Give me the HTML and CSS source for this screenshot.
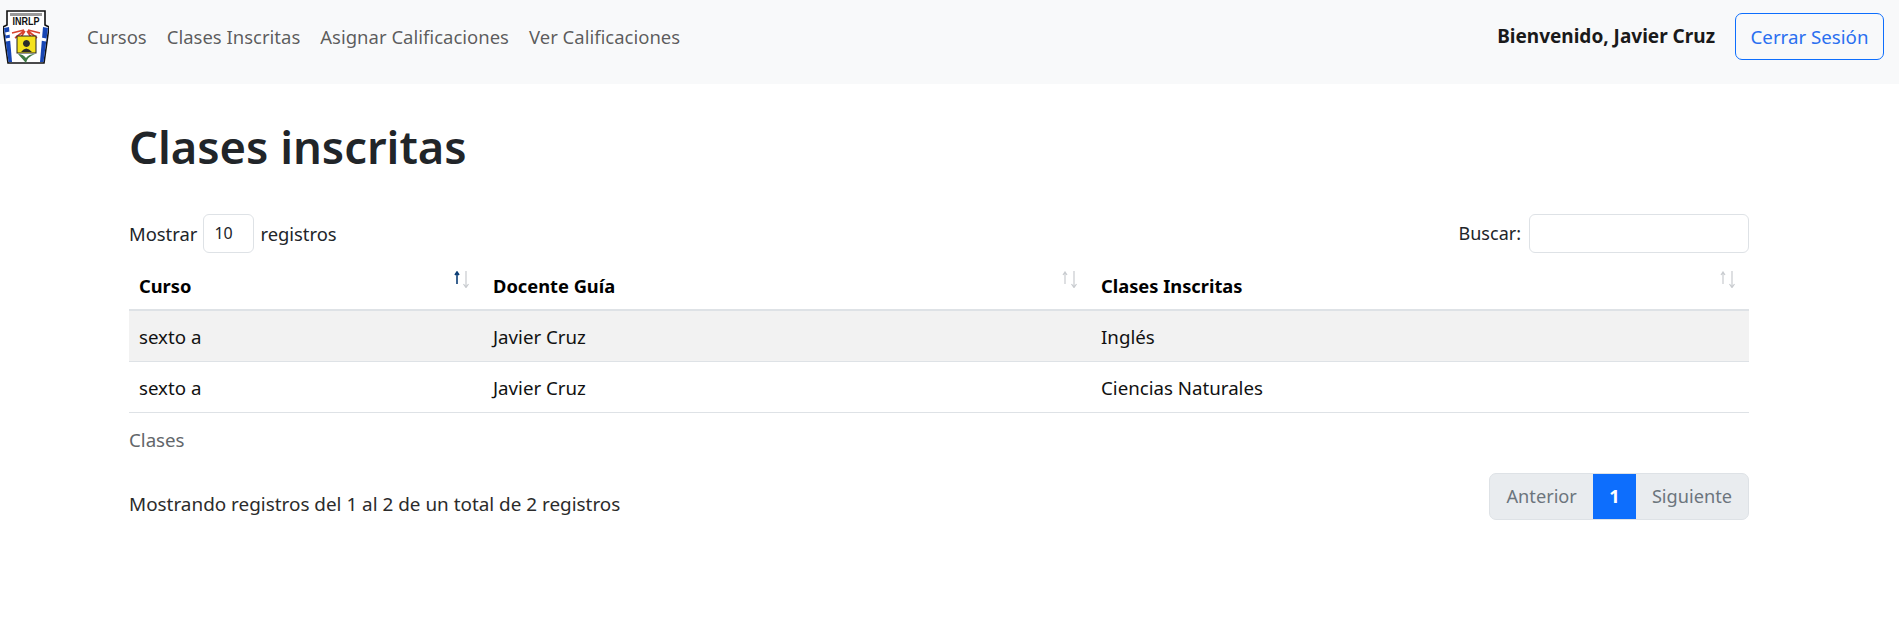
FILE: index.html
```html
<!DOCTYPE html>
<html lang="es">
<head>
<meta charset="utf-8">
<title>Clases inscritas</title>
<link rel="stylesheet" href="styles.css">
</head>
<body>
<nav class="navbar">
  <div class="nav-left">
    <svg class="logo" viewBox="0 0 46 54" width="46" height="54">
      <path d="M4 1 H42 V15 L46 17 L41 53 H5 L0 17 L4 15 Z" fill="#fff" stroke="#111" stroke-width="1.6"/>
      <path d="M1 18 L6 17 L9 52 H5.5 Z" fill="#1746b4"/>
      <path d="M45 18 L40 17 L37 52 H40.500 Z" fill="#1746b4"/>
      <path d="M3 30 L8 29 M2.500 24 L7 23 M43 30 L38 29" stroke="#fff" stroke-width="3"/>
      <rect x="7" y="3" width="32" height="3" fill="#9a9a9a"/>
      <text class="logo-text" x="23" y="15" text-anchor="middle" textLength="27" lengthAdjust="spacingAndGlyphs">INRLP</text>
      <path d="M9 23 L21 20 M12 28 L21 21 M37 23 L25 20 M34 28 L25 21 M18 27 L22 21 M28 27 L24 21" stroke="#d8432e" stroke-width="1.600"/>
      <rect x="14" y="26" width="19" height="17" fill="#f5e21c" stroke="#222" stroke-width="1"/>
      <path d="M23.500 30 a3.500 3.500 0 1 1 -.1 0 Z M18 42 q5 -7 11 0 Z" fill="#2b2b2b"/>
      <path d="M15 44 q8 9 8 9 q1 -6 9 -9 q-6 0 -9 4 q-3 -4 -8 -4 Z" fill="#3f7a45"/>
    </svg>
    <ul class="nav-links">
      <li>Cursos</li>
      <li>Clases Inscritas</li>
      <li>Asignar Calificaciones</li>
      <li>Ver Calificaciones</li>
    </ul>
  </div>
  <div class="nav-right">
    <span class="welcome">Bienvenido, Javier Cruz</span>
    <button class="logout">Cerrar Sesión</button>
  </div>
</nav>
<main class="container">
  <h1>Clases inscritas</h1>
  <div class="controls">
    <div class="length">Mostrar <span class="select">10</span> registros</div>
    <div class="search">Buscar: <span class="input"></span></div>
  </div>
  <table>
    <thead>
      <tr>
        <th class="c1">Curso<svg class="sort active" viewBox="0 0 18 17" width="18" height="17"><path class="up" d="M4 13 V1 M2 4 L4 1 L6 4"/><path class="down" d="M13 0 V16 M10.500 13 L13 16.500 L15.500 13"/></svg></th>
        <th class="c2">Docente Guía<svg class="sort" viewBox="0 0 18 17" width="18" height="17"><path class="up" d="M4 13 V1 M2 4 L4 1 L6 4"/><path class="down" d="M13 0 V16 M10.500 13 L13 16.500 L15.500 13"/></svg></th>
        <th class="c3">Clases Inscritas<svg class="sort" viewBox="0 0 18 17" width="18" height="17"><path class="up" d="M4 13 V1 M2 4 L4 1 L6 4"/><path class="down" d="M13 0 V16 M10.500 13 L13 16.500 L15.500 13"/></svg></th>
      </tr>
    </thead>
    <tbody>
      <tr class="odd"><td>sexto a</td><td>Javier Cruz</td><td>Inglés</td></tr>
      <tr><td>sexto a</td><td>Javier Cruz</td><td>Ciencias Naturales</td></tr>
    </tbody>
  </table>
  <div class="caption">Clases</div>
  <div class="footer">
    <div class="info">Mostrando registros del 1 al 2 de un total de 2 registros</div>
    <div class="pager"><span class="prev">Anterior</span><span class="cur">1</span><span class="next">Siguiente</span></div>
  </div>
</main>
</body>
</html>
```
FILE: styles.css
```css
* { box-sizing: border-box; }
body { margin: 0; font-family: "Noto Sans", sans-serif; font-size: 18.7px; line-height: 27px; color: #212529; background: #fff; }
.navbar { height: 84px; background: #f8f9fa; display: flex; align-items: center; justify-content: space-between; padding: 0 15px 11px 0; }
.nav-left, .nav-right { display: flex; align-items: center; }
.logo { margin: 1px 0 0 3px; }
.nav-links { list-style: none; display: flex; gap: 20px; margin: 0 0 0 38px; padding: 0; color: rgba(0,0,0,.65); font-size: 18.5px; }
.logo-text { font-family: "Liberation Sans", sans-serif; font-size: 10px; font-weight: 700; fill: #111; }
.welcome { font-weight: 700; color: #1a1a1a; margin-right: 20px; font-size: 19px; }
.logout { font: inherit; height: 47px; width: 149px; color: #2a6ff0; background: transparent; border: 1px solid #0d6efd; border-radius: 7px; padding: 0; }
.container { width: 1620px; margin-left: 129px; }
h1 { font-size: 45.3px; line-height: 58px; font-weight: 600; margin: 34px 0 38px; }
.controls { display: flex; justify-content: space-between; align-items: center; height: 39px; }
.length { display: flex; align-items: center; gap: 6px; font-size: 18.4px; }
.search { display: flex; align-items: center; gap: 8px; font-size: 18px; }
.select { width: 51px; height: 39px; border: 1px solid #dee2e6; border-radius: 6px; font-size: 16px; padding-left: 10px; display: flex; align-items: center; }
.input { width: 220px; height: 39px; border: 1px solid #dee2e6; border-radius: 6px; }
table { width: 100%; border-collapse: collapse; table-layout: fixed; margin-top: 7px; }
th { text-align: left; font-weight: 700; color: #000; padding: 2px 10px 0; height: 50px; border-bottom: 2px solid #dee2e6; position: relative; font-size: 18.3px; }
.c1 { width: 354px; }
.c2 { width: 608px; }
td { padding: 1px 10px 0; height: 51px; color: #111; border-bottom: 1px solid #dee2e6; }
.odd td { background: #f2f2f2; }
.sort { position: absolute; right: 12px; top: 11px; fill: none; stroke-width: 1.2; }
.sort path { stroke: #c8cbcf; }
.sort.active .up { stroke: #0b3d75; stroke-width: 1.6; }
.caption { color: #62666a; margin-top: 13px; }
.footer { display: flex; justify-content: space-between; align-items: center; margin-top: 20px; }
.info { color: #2b2b2b; margin-top: 17px; font-size: 18.9px; }
.pager { display: flex; height: 47px; border: 1px solid #dee2e6; border-radius: 7px; overflow: hidden; background: #e9ecef; color: #6c757d; line-height: 45px; font-size: 18.2px; }
.pager span { padding: 0 16px; }
.pager .cur { background: #0d6efd; color: #fff; font-weight: 700; width: 43px; padding: 0; text-align: center; }
```
